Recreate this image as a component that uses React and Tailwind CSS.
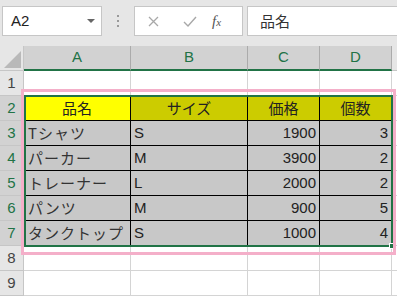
import React from "react";

const cols = [
  { key: "A", w: "w-[107px]" },
  { key: "B", w: "w-[117px]" },
  { key: "C", w: "w-[72px]" },
  { key: "D", w: "w-[72px]" },
];

const items = [
  ["Tシャツ", "S", "1900", "3"],
  ["パーカー", "M", "3900", "2"],
  ["トレーナー", "L", "2000", "2"],
  ["パンツ", "M", "900", "5"],
  ["タンクトップ", "S", "1000", "4"],
];

const jp = "font-['Noto_Sans_CJK_JP','Noto_Sans',sans-serif]";

function RowHead({ n, active }) {
  return (
    <div
      className={`w-[24px] shrink-0 flex items-center justify-center border-r border-b border-[#c6c6c6] text-[15px] ${
        active ? "bg-[#d2d2d2] text-[#217346]" : "bg-[#e6e6e6] text-[#444]"
      }`}
    >
      {n}
    </div>
  );
}

function BlankRow({ n }) {
  return (
    <div className="flex h-[25px]">
      <RowHead n={n} />
      {cols.map((c) => (
        <div key={c.key} className={`${c.w} shrink-0 border-r border-b border-[#d4d4d4] bg-white`} />
      ))}
      <div className="flex-1 border-b border-[#d4d4d4] bg-white" />
    </div>
  );
}

export default function App() {
  return (
    <div className="w-[397px] h-[296px] overflow-hidden bg-white font-['Liberation_Sans',sans-serif] text-[#222]">
      {/* name box + formula bar */}
      <div className="h-[46px] bg-[#e6e6e6] flex items-start pt-[6px] pl-[2px]">
        <div className="w-[100px] h-[30px] bg-white border border-[#c6c6c6] flex items-center pl-[8px] pr-[6px]">
          <span className="text-[15px] flex-1">A2</span>
          <span className="w-0 h-0 border-l-[4px] border-r-[4px] border-t-[4px] border-l-transparent border-r-transparent border-t-[#666]" />
        </div>
        <div className="w-[32px] h-[30px] flex flex-col items-center justify-center gap-[3px]">
          <span className="w-[2px] h-[2px] bg-[#999]" />
          <span className="w-[2px] h-[2px] bg-[#999]" />
          <span className="w-[2px] h-[2px] bg-[#999]" />
        </div>
        <div className="w-[109px] h-[30px] bg-white border border-[#c6c6c6] flex items-center">
          <svg className="ml-[13px]" width="11" height="11" viewBox="0 0 11 11">
            <path d="M1 1L10 10M10 1L1 10" stroke="#a8a8a8" strokeWidth="1.3" />
          </svg>
          <svg className="ml-[24px]" width="14" height="11" viewBox="0 0 14 11">
            <path d="M1 6L5 10L13 1" stroke="#a8a8a8" strokeWidth="1.4" fill="none" />
          </svg>
          <span className="ml-[15px] text-[15px] italic text-[#555] font-['Liberation_Serif',serif] leading-none">
            f<span className="text-[11px]">x</span>
          </span>
        </div>
        <div className="ml-[4px] flex-1 h-[30px] bg-white border border-[#c6c6c6] border-r-0 flex items-center pl-[12px]">
          <span className={`text-[15px] text-[#333] ${jp}`}>品名</span>
        </div>
      </div>

      {/* sheet */}
      <div className="relative">
        {/* column headers */}
        <div className="flex h-[25px]">
          <div className="w-[24px] shrink-0 bg-[#e6e6e6] border-r border-b border-[#c6c6c6] flex items-end justify-end pr-[2px] pb-[2px]">
            <svg width="17" height="17" viewBox="0 0 17 17">
              <path d="M17 0L17 17L0 17Z" fill="#b9b9b9" />
            </svg>
          </div>
          {cols.map((c) => (
            <div
              key={c.key}
              className={`${c.w} shrink-0 bg-[#d2d2d2] border-r border-[#ababab] border-b-2 border-b-[#217346] flex items-center justify-center text-[15px] text-[#217346]`}
            >
              {c.key}
            </div>
          ))}
          <div className="flex-1 bg-[#e6e6e6] border-b border-[#c6c6c6]" />
        </div>

        <BlankRow n={1} />

        {/* header row of the table */}
        <div className="flex h-[25px]">
          <RowHead n={2} active />
          <div className={`${cols[0].w} shrink-0 bg-[#ffff00] border-r border-b border-black flex items-center justify-center text-[15px] ${jp}`}>品名</div>
          <div className={`${cols[1].w} shrink-0 bg-[#cccc00] border-r border-b border-black flex items-center justify-center text-[15px] ${jp}`}>サイズ</div>
          <div className={`${cols[2].w} shrink-0 bg-[#cccc00] border-r border-b border-black flex items-center justify-center text-[15px] ${jp}`}>価格</div>
          <div className={`${cols[3].w} shrink-0 bg-[#cccc00] border-r border-b border-black flex items-center justify-center text-[15px] ${jp}`}>個数</div>
          <div className="flex-1 border-b border-[#d4d4d4] bg-white" />
        </div>

        {items.map((r, i) => (
          <div key={i} className="flex h-[25px]">
            <RowHead n={i + 3} active />
            <div className={`${cols[0].w} shrink-0 bg-[#c8c8c8] border-r border-b border-black flex items-center pl-[4px] text-[15px] tracking-[1px] text-[#333] ${jp}`}>{r[0]}</div>
            <div className={`${cols[1].w} shrink-0 bg-[#c8c8c8] border-r border-b border-black flex items-center pl-[3px] text-[15px]`}>{r[1]}</div>
            <div className={`${cols[2].w} shrink-0 bg-[#c8c8c8] border-r border-b border-black flex items-center justify-end pr-[3px] text-[15px]`}>{r[2]}</div>
            <div className={`${cols[3].w} shrink-0 bg-[#c8c8c8] border-r border-b border-black flex items-center justify-end pr-[3px] text-[15px]`}>{r[3]}</div>
            <div className="flex-1 border-b border-[#d4d4d4] bg-white" />
          </div>
        ))}

        <BlankRow n={8} />
        <BlankRow n={9} />

        {/* selection A2:D7 */}
        <div className="absolute left-[24px] top-[49px] w-[369px] h-[152px] border-2 border-[#217346] pointer-events-none">
          <span className="absolute -right-[4px] -bottom-[4px] w-[6px] h-[6px] bg-[#217346] border border-white" />
        </div>

        {/* pink annotation frame */}
        <div className="absolute left-[21px] top-[43px] w-[375px] h-[166px] border-[3px] border-[#f4afc9] pointer-events-none" />
      </div>
    </div>
  );
}
